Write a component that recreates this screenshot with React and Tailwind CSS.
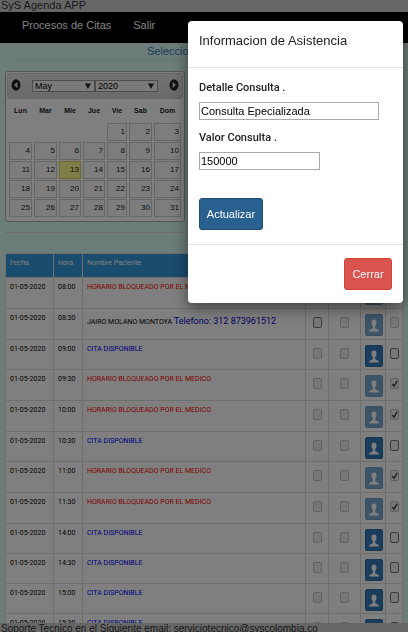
import React, { useState } from "react";

const days = [
  { key: "lun", label: "Lun" },
  { key: "mar", label: "Mar" },
  { key: "mie", label: "Mie" },
  { key: "jue", label: "Jue" },
  { key: "vie", label: "Vie" },
  { key: "sab", label: "Sab" },
  { key: "dom", label: "Dom" },
];

const weeks = [
  [null, null, null, null, 1, 2, 3],
  [4, 5, 6, 7, 8, 9, 10],
  [11, 12, 13, 14, 15, 16, 17],
  [18, 19, 20, 21, 22, 23, 24],
  [25, 26, 27, 28, 29, 30, 31],
];

const today = 13;

const appointments = [
  { time: "08:00", status: "blocked" },
  {
    time: "08:30",
    status: "taken",
    name: "JAIRO MOLANO MONTOYA",
    phone: "312 873961512",
  },
  { time: "09:00", status: "free" },
  { time: "09:30", status: "blocked" },
  { time: "10:00", status: "blocked" },
  { time: "10:30", status: "free" },
  { time: "11:00", status: "blocked" },
  { time: "11:30", status: "blocked" },
  { time: "14:00", status: "free" },
  { time: "14:30", status: "free" },
  { time: "15:00", status: "free" },
  { time: "15:30", status: "free" },
];

const UserIcon = () => (
  <svg viewBox="0 0 10 13" className="h-[13px] w-[10px]" fill="currentColor">
    <path d="M5 .5C3.300.5 2.500 1.700 2.500 3.500c0 1.500.5 2.700 1.300 3.400v1.700c0 .8-.2 1-.8 1.200L1.200 10.500C.5 10.800.2 11 .2 11.700v.8h9.600v-.8c0-.7-.3-.9-1-1.200L7 9.800c-.6-.2-.8-.4-.8-1.200V6.900c.8-.7 1.300-1.900 1.300-3.400C7.500 1.700 6.700.5 5 .5z" />
  </svg>
);

const Arrow = ({ left }) => (
  <svg viewBox="0 0 10 12" className="h-3 w-[10px]">
    <ellipse cx="5" cy="6" rx="4.500" ry="5.800" fill="#222" />
    <path d={left ? "M6.300 3v6L3.200 6z" : "M3.700 3v6L6.800 6z"} fill="#eee" />
  </svg>
);

const Tick = ({ label, ...props }) => (
  <input
    type="checkbox"
    aria-label={label}
    className="block h-[11px] w-[9px] appearance-none rounded-[2px] border border-[#777] bg-[#eee] bg-center bg-no-repeat checked:bg-[url('data:image/svg+xml,%3Csvg%20xmlns=%22http://www.w3.org/2000/svg%22%20viewBox=%220%200%208%2010%22%3E%3Cpath%20d=%22M1.500%205.500l2%202.500L7%202%22%20fill=%22none%22%20stroke=%22%23444%22%20stroke-width=%221.600%22/%3E%3C/svg%3E')] disabled:border-[#c4c4c4]"
    {...props}
  />
);

const CalendarSelect = ({ label, options }) => (
  <div className="relative">
    <select
      aria-label={label}
      className="block h-3 w-[63px] appearance-none border border-[#999] bg-[#f4f4f4] px-[2px] text-[9px] leading-[10px] text-black"
    >
      {options.map((option) => (
        <option key={option}>{option}</option>
      ))}
    </select>
    <svg
      viewBox="0 0 6 6"
      className="pointer-events-none absolute top-[3px] right-1 h-[6px] w-[6px]"
    >
      <path d="M0 .5h6L3 6z" fill="#222" />
    </svg>
  </div>
);

const Calendar = () => (
  <div className="w-[180px] rounded-[3px] border border-[#aaa] bg-white p-px pb-[3px]">
    <div className="flex h-[26px] items-center justify-between rounded-[3px] border border-[#ccc] bg-linear-to-b from-[#e6e6e6] to-[#d4d4d4] px-[3px]">
      <button type="button" aria-label="Anterior" className="pb-[2px]">
        <Arrow left />
      </button>
      <div className="flex">
        <CalendarSelect label="Mes" options={["May", "Jun", "Jul"]} />
        <CalendarSelect label="Año" options={["2020", "2021", "2022"]} />
      </div>
      <button type="button" aria-label="Siguiente" className="pb-[2px]">
        <Arrow />
      </button>
    </div>
    <table className="w-full table-fixed border-separate border-spacing-x-[2px] border-spacing-y-px text-[8px] leading-4 text-[#222]">
      <colgroup>
        <col className="w-[23px]" />
        <col className="w-[23px]" />
        <col className="w-[22px]" />
        <col className="w-[22px]" />
        <col className="w-[20px]" />
        <col className="w-[23px]" />
        <col />
      </colgroup>
      <thead>
        <tr>
          {days.map((day) => (
            <th key={day.key} className="h-[22px] p-0 text-[7px] font-bold">
              {day.label}
            </th>
          ))}
        </tr>
      </thead>
      <tbody>
        {weeks.map((week, i) => (
          <tr key={i}>
            {week.map((day, j) =>
              day ? (
                <td
                  key={j}
                  className={`h-[18px] border p-0 pr-px text-right ${
                    day === today
                      ? "border-[#d8d060] bg-[#fffa90]"
                      : "border-[#ccc] bg-[#fafafa]"
                  }`}
                >
                  {day}
                </td>
              ) : (
                <td key={j} />
              )
            )}
          </tr>
        ))}
      </tbody>
    </table>
  </div>
);

const Patient = ({ item }) => {
  if (item.status === "blocked") {
    return <span className="text-[#ff0000]">HORARIO BLOQUEADO POR EL MEDICO</span>;
  }
  if (item.status === "free") {
    return <span className="text-[#0000ff]">CITA DISPONIBLE</span>;
  }
  return (
    <>
      {item.name}{" "}
      <span className="text-[9px] leading-5 text-[#0000cc]">
        Telefono: {item.phone}
      </span>
    </>
  );
};

const Agenda = () => (
  <table className="w-full table-fixed border-collapse bg-white font-[Roboto,sans-serif] text-[7px] leading-[14px] whitespace-nowrap text-black">
    <colgroup>
      <col className="w-[48px]" />
      <col className="w-[29px]" />
      <col />
      <col className="w-[23px]" />
      <col className="w-[32px]" />
      <col className="w-[25px]" />
      <col className="w-[17px]" />
    </colgroup>
    <thead>
      <tr className="h-6 bg-[#3498db] text-left align-top text-white">
        <th className="border border-[#ddd] px-1 py-[2px] font-normal">Fecha</th>
        <th className="border border-[#ddd] px-1 py-[2px] font-normal">Hora</th>
        <th className="border border-[#ddd] px-1 py-[2px] font-normal">
          Nombre Paciente
        </th>
        <th colSpan={4} />
      </tr>
    </thead>
    <tbody>
      {appointments.map((item) => (
        <tr
          key={item.time}
          className={`align-top ${item.status === "free" ? "h-[30px]" : "h-[31px]"}`}
        >
          <td className="border border-[#ddd] px-1 py-[2px]">01-05-2020</td>
          <td className="border border-[#ddd] px-1 py-[2px]">{item.time}</td>
          <td className="border border-[#ddd] px-1 py-[2px]">
            <Patient item={item} />
          </td>
          <td className="border border-[#ddd] px-[7px] pt-2">
            <Tick label="Asiste" disabled={item.status !== "taken"} />
          </td>
          <td className="border border-[#ddd] px-[11px] pt-2">
            <Tick label="Cancela" disabled />
          </td>
          <td className="border border-[#ddd] pt-[5px] pl-1">
            <button
              type="button"
              aria-label="Paciente"
              disabled={item.status !== "free"}
              className="flex h-[22px] w-[18px] items-center justify-center rounded-[2px] border border-[#2e6da4] bg-[#337ab7] text-white disabled:opacity-65"
            >
              <UserIcon />
            </button>
          </td>
          <td className="border border-[#ddd] px-1 pt-2">
            <Tick
              label="Bloquear"
              disabled={item.status !== "free"}
              defaultChecked={item.status === "blocked"}
            />
          </td>
        </tr>
      ))}
    </tbody>
  </table>
);

const AttendanceModal = () => {
  const [detail, setDetail] = useState("Consulta Epecializada");
  const [value, setValue] = useState("150000");

  return (
    <div className="fixed inset-0 flex items-start justify-end bg-black/50 pt-[21px] pr-[5px]">
      <div
        role="dialog"
        aria-labelledby="modal-title"
        className="w-[215px] rounded-[4px] bg-white text-[11px] leading-5 text-[#222] shadow-[0_5px_15px_rgba(0,0,0,0.5)]"
      >
        <div className="border-b border-[#e5e5e5] px-[11px] pt-[10px] pb-4">
          <h4 id="modal-title" className="text-[13px]">
            Informacion de Asistencia
          </h4>
        </div>
        <div className="px-[11px] pt-[10px] pb-[14px]">
          <label
            htmlFor="detail"
            className="block font-[Roboto,sans-serif] font-medium"
          >
            Detalle Consulta .
          </label>
          <input
            id="detail"
            type="text"
            value={detail}
            onChange={(e) => setDetail(e.target.value)}
            className="mt-1 block h-[18px] w-[180px] border border-[#a9a9a9] px-px text-black"
          />
          <label
            htmlFor="value"
            className="mt-2 block font-[Roboto,sans-serif] font-medium"
          >
            Valor Consulta .
          </label>
          <input
            id="value"
            type="text"
            value={value}
            onChange={(e) => setValue(e.target.value)}
            className="mt-1 block h-[18px] w-[121px] border border-[#a9a9a9] px-px text-black"
          />
          <button
            type="button"
            className="mt-7 block h-8 w-16 rounded-[3px] border border-[#204d74] bg-[#286090] text-white"
          >
            Actualizar
          </button>
        </div>
        <div className="flex justify-end border-t border-[#e5e5e5] px-[11px] py-[13px]">
          <button
            type="button"
            className="h-8 w-12 rounded-[3px] border border-[#d43f3a] bg-[#d9534f] text-white"
          >
            Cerrar
          </button>
        </div>
      </div>
    </div>
  );
};

const App = () => {
  return (
    <div className="flex h-screen flex-col overflow-hidden bg-[#d8f8f0] font-['Liberation_Sans',Arial,sans-serif]">
      <header className="h-3 shrink-0 bg-[#ccc] px-px text-[11px] leading-[11px] text-[#333]">
        SyS Agenda APP
      </header>
      <nav className="flex h-[31px] shrink-0 items-center gap-[22px] bg-black px-[22px] pb-1 text-[11px] text-white">
        <a href="#citas">Procesos de Citas</a>
        <a href="#salir">Salir</a>
      </nav>
      <main className="min-h-0 flex-1 overflow-hidden px-[5px]">
        <h3 className="ml-[142px] h-4 text-[11px] leading-4 text-[#337ab7]">
          Seleccio
        </h3>
        <hr className="mx-[11px] mb-[11px] border-[#ccebe0]" />
        <Calendar />
        <hr className="mt-[10px] mb-5 border-[#dcd8d4]" />
        <Agenda />
      </main>
      <footer className="h-[9px] shrink-0 overflow-hidden bg-[#ccc] px-px text-[10px] leading-[11px] whitespace-nowrap text-[#333]">
        Soporte Tecnico en el Siguiente email: serviciotecnico@syscolombia.co
      </footer>
      <AttendanceModal />
    </div>
  );
};

export default App;
